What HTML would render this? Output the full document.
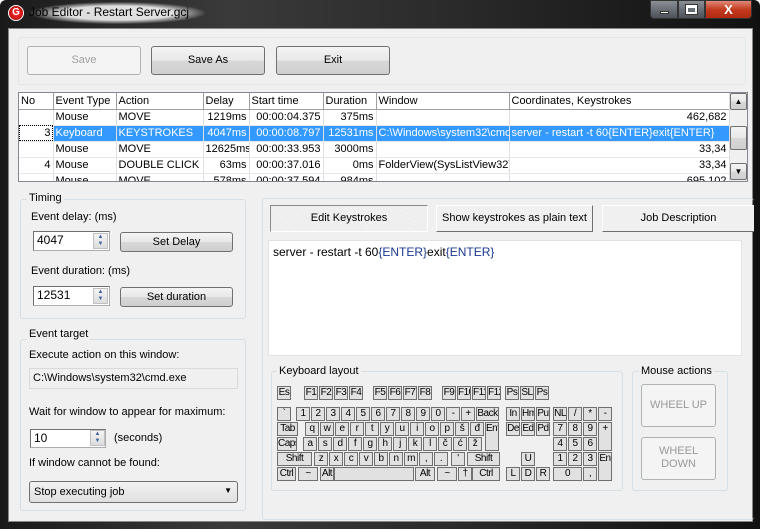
<!DOCTYPE html>
<html><head><meta charset="utf-8">
<style>
*{box-sizing:border-box;margin:0;padding:0}
body{width:760px;height:529px;overflow:hidden;background:#fff;font-family:"Liberation Sans",sans-serif;font-size:11px;color:#000;position:relative}
.a{position:absolute}
#frame{left:0;top:0;width:760px;height:529px;background:linear-gradient(90deg,#1a1a1a 0,#3a3a3a 30%,#2a2a2a 60%,#111 100%);border-radius:6px 6px 0 0}
#client{left:8px;top:28px;width:745px;height:494px;background:#f0f0f0;border:1px solid #888}
.btn{background:linear-gradient(#f4f4f4,#e8e8e8 50%,#d8d8d8 51%,#cfcfcf);border:1px solid #707070;border-radius:3px;text-align:center;font-size:11px}
.dis{background:#f4f4f4;border:1px solid #adb2b5;color:#a0a0a0;border-radius:3px;text-align:center}
.grp{border:1px solid #d5dfe5;border-radius:3px}
.lg{background:#f0f0f0;padding:0 2px;font-size:11px}
table{border-collapse:collapse;font-size:11px}
td{height:16px;padding:0 2px;white-space:nowrap;overflow:hidden;border-right:1px solid #e0e0e0;border-bottom:1px solid #e8e8e8}
.k{position:absolute;height:14px;width:14px;background:#e1e1e1;border:1px solid #707070;font-size:10px;text-align:center;line-height:12px;overflow:hidden;white-space:nowrap;letter-spacing:-0.5px}
.inp{background:#fff;border:1px solid #abadb3;border-top-color:#707070;border-left-color:#707070;padding-left:3px;font-size:12px;line-height:16px}
.spin{background:linear-gradient(#f4f4f4,#dcdcdc);border:1px solid #c0c0c0}
</style></head><body>
<div id="frame" class="a"></div>
<div class="a" style="left:30px;top:2px;width:175px;height:22px;background:radial-gradient(ellipse,rgba(255,255,255,.85) 45%,rgba(255,255,255,0) 72%)"></div>
<div class="a" style="left:8px;top:5px;width:16px;height:16px;border-radius:50%;background:radial-gradient(#f33,#a00);border:1px solid #fff;color:#fff;font-size:10px;font-weight:bold;text-align:center;line-height:14px">G</div>
<div class="a" style="left:29px;top:5px;font-size:12px;color:#000">Job Editor - Restart Server.gcj</div>
<div class="a" style="left:650px;top:0;width:28px;height:19px;background:linear-gradient(#8a8f96,#4c5058);border:1px solid #333;border-radius:0 0 0 4px"><div class="a" style="left:9px;top:10px;width:9px;height:3px;background:#fff;border:1px solid #333"></div></div>
<div class="a" style="left:678px;top:0;width:27px;height:19px;background:linear-gradient(#8a8f96,#4c5058);border:1px solid #333"><div class="a" style="left:7px;top:4px;width:11px;height:9px;border:2px solid #fff;border-top-width:3px;outline:1px solid #333"></div></div>
<div class="a" style="left:705px;top:0;width:47px;height:19px;background:linear-gradient(#e08a78,#c23b1f 50%,#b02a10);border:1px solid #333;border-radius:0 0 4px 0;color:#fff;font-weight:bold;font-size:13px;text-align:center;line-height:17px">X</div>

<div id="client" class="a"></div>
<div class="a grp" style="left:18px;top:37px;width:728px;height:48px;border-color:#dfe6ea"></div>
<div class="a dis" style="left:27px;top:46px;width:114px;height:29px;line-height:27px">Save</div>
<div class="a btn" style="left:151px;top:46px;width:114px;height:29px;line-height:27px">Save As</div>
<div class="a btn" style="left:276px;top:46px;width:114px;height:29px;line-height:27px">Exit</div>

<div class="a" style="left:18px;top:92px;width:730px;height:90px;background:#fff;border:1px solid #828790;overflow:hidden">
<table style="width:710px;table-layout:fixed">
<colgroup><col style="width:34px"><col style="width:63px"><col style="width:87px"><col style="width:46px"><col style="width:74px"><col style="width:53px"><col style="width:133px"><col style="width:220px"></colgroup>
<tr style="background:#fff"><td style="border:1px solid #a0a0a0;border-left:0;border-top:0">No</td><td style="border:1px solid #a0a0a0;border-top:0">Event Type</td><td style="border:1px solid #a0a0a0;border-top:0">Action</td><td style="border:1px solid #a0a0a0;border-top:0">Delay</td><td style="border:1px solid #a0a0a0;border-top:0">Start time</td><td style="border:1px solid #a0a0a0;border-top:0">Duration</td><td style="border:1px solid #a0a0a0;border-top:0">Window</td><td style="border:1px solid #a0a0a0;border-top:0">Coordinates, Keystrokes</td></tr>
<tr><td></td><td>Mouse</td><td>MOVE</td><td align="right">1219ms</td><td align="right">00:00:04.375</td><td align="right">375ms</td><td></td><td align="right">462,682</td></tr>
<tr style="background:#3399ff;color:#fff"><td align="right" style="background:#fff;color:#000;outline:1px dotted #000;outline-offset:-1px">3</td><td>Keyboard</td><td>KEYSTROKES</td><td align="right">4047ms</td><td align="right">00:00:08.797</td><td align="right">12531ms</td><td>C:\Windows\system32\cmd.exe</td><td>server - restart -t 60{ENTER}exit{ENTER}</td></tr>
<tr><td></td><td>Mouse</td><td>MOVE</td><td align="right">12625ms</td><td align="right">00:00:33.953</td><td align="right">3000ms</td><td></td><td align="right">33,34</td></tr>
<tr><td align="right">4</td><td>Mouse</td><td>DOUBLE CLICK</td><td align="right">63ms</td><td align="right">00:00:37.016</td><td align="right">0ms</td><td>FolderView(SysListView32)</td><td align="right">33,34</td></tr>
<tr><td></td><td>Mouse</td><td>MOVE</td><td align="right">578ms</td><td align="right">00:00:37.594</td><td align="right">984ms</td><td></td><td align="right">695,102</td></tr>
</table>
<div class="a" style="left:710px;top:0;width:18px;height:88px;background:#f0f0f0;border-left:1px solid #ddd">
<div class="a btn" style="left:0;top:0;width:17px;height:17px;font-size:8px;line-height:15px;border-radius:2px">▲</div>
<div class="a btn" style="left:0;top:33px;width:17px;height:24px;border-radius:2px"></div>
<div class="a btn" style="left:0;top:70px;width:17px;height:17px;font-size:8px;line-height:15px;border-radius:2px">▼</div>
</div>
</div>

<div class="a grp" style="left:20px;top:199px;width:226px;height:120px"></div>
<div class="a lg" style="left:27px;top:192px">Timing</div>
<div class="a" style="left:31px;top:211px">Event delay: (ms)</div>
<div class="a inp" style="left:33px;top:231px;width:77px;height:20px">4047</div>
<div class="a spin" style="left:93px;top:233px;width:15px;height:16px;font-size:6px;color:#4060a0;text-align:center;line-height:7px">▲<br>▼</div>
<div class="a btn" style="left:120px;top:232px;width:113px;height:20px;line-height:18px">Set Delay</div>
<div class="a" style="left:31px;top:265px">Event duration: (ms)</div>
<div class="a inp" style="left:33px;top:286px;width:77px;height:20px">12531</div>
<div class="a spin" style="left:93px;top:288px;width:15px;height:16px;font-size:6px;color:#4060a0;text-align:center;line-height:7px">▲<br>▼</div>
<div class="a btn" style="left:120px;top:287px;width:113px;height:20px;line-height:18px">Set duration</div>

<div class="a grp" style="left:20px;top:339px;width:226px;height:172px"></div>
<div class="a lg" style="left:27px;top:328px">Event target</div>
<div class="a" style="left:29px;top:349px">Execute action on this window:</div>
<div class="a" style="left:29px;top:368px;width:209px;height:21px;background:#f0f0f0;border:1px solid #dadada;padding:3px 3px;font-size:11px">C:\Windows\system32\cmd.exe</div>
<div class="a" style="left:29px;top:406px">Wait for window to appear for maximum:</div>
<div class="a inp" style="left:30px;top:429px;width:76px;height:19px">10</div>
<div class="a spin" style="left:90px;top:430px;width:15px;height:16px;font-size:6px;color:#4060a0;text-align:center;line-height:7px">▲<br>▼</div>
<div class="a" style="left:114px;top:432px">(seconds)</div>
<div class="a" style="left:29px;top:457px">If window cannot be found:</div>
<div class="a btn" style="left:29px;top:481px;width:209px;height:22px;text-align:left;padding:4px 4px;font-size:11px;background:linear-gradient(#f2f2f2,#e0e0e0)">Stop executing job<span class="a" style="right:5px;top:4px;font-size:8px">▼</span></div>

<div class="a grp" style="left:262px;top:198px;width:492px;height:322px;border-right:0"></div>
<div class="a" style="left:270px;top:205px;width:158px;height:27px;background:repeating-linear-gradient(45deg,#f5f5f5 0 1px,#e9e9e9 1px 2px);border:1px solid #8a8a8a;border-right-color:#fff;border-bottom-color:#fff;text-align:center;line-height:25px">Edit Keystrokes</div>
<div class="a" style="left:436px;top:205px;width:157px;height:27px;background:#f0f0f0;border:1px solid #fff;border-right-color:#707070;border-bottom-color:#707070;text-align:center;line-height:25px">Show keystrokes as plain text</div>
<div class="a" style="left:602px;top:205px;width:152px;height:27px;background:#f0f0f0;border:1px solid #fff;border-right:0;border-bottom-color:#707070;text-align:center;line-height:25px">Job Description</div>
<div class="a" style="left:268px;top:240px;width:474px;height:116px;background:#fff;border:1px solid #e2e2e2;padding:4px 4px;font-size:12px">server - restart -t 60<span style="color:#1a3a90">{ENTER}</span>exit<span style="color:#1a3a90">{ENTER}</span></div>

<div class="a grp" style="left:271px;top:371px;width:352px;height:120px"></div>
<div class="a lg" style="left:277px;top:365px">Keyboard layout</div>
<div class="a grp" style="left:632px;top:371px;width:96px;height:120px"></div>
<div class="a lg" style="left:639px;top:365px">Mouse actions</div>
<div class="a dis" style="left:641px;top:384px;width:75px;height:43px;line-height:41px;font-size:11px;color:#999">WHEEL UP</div>
<div class="a dis" style="left:641px;top:437px;width:75px;height:43px;padding-top:7px;line-height:13px;font-size:11px;color:#999">WHEEL<br>DOWN</div>

<div class="k" style="left:277px;top:386px">Es</div>
<div class="k" style="left:304px;top:386px">F1</div><div class="k" style="left:319px;top:386px">F2</div><div class="k" style="left:334px;top:386px">F3</div><div class="k" style="left:349px;top:386px">F4</div>
<div class="k" style="left:373px;top:386px">F5</div><div class="k" style="left:388px;top:386px">F6</div><div class="k" style="left:403px;top:386px">F7</div><div class="k" style="left:418px;top:386px">F8</div>
<div class="k" style="left:442px;top:386px">F9</div><div class="k" style="left:457px;top:386px">F10</div><div class="k" style="left:472px;top:386px">F11</div><div class="k" style="left:487px;top:386px">F12</div>
<div class="k" style="left:505px;top:386px">Ps</div><div class="k" style="left:520px;top:386px">SL</div><div class="k" style="left:535px;top:386px">Ps</div>

<div class="k" style="left:277px;top:407px">`</div>
<div class="k" style="left:296px;top:407px">1</div><div class="k" style="left:311px;top:407px">2</div><div class="k" style="left:326px;top:407px">3</div><div class="k" style="left:341px;top:407px">4</div><div class="k" style="left:356px;top:407px">5</div><div class="k" style="left:371px;top:407px">6</div><div class="k" style="left:386px;top:407px">7</div><div class="k" style="left:401px;top:407px">8</div><div class="k" style="left:416px;top:407px">9</div><div class="k" style="left:431px;top:407px">0</div><div class="k" style="left:446px;top:407px">-</div><div class="k" style="left:461px;top:407px">+</div>
<div class="k" style="left:476px;top:407px;width:23px">Back</div>
<div class="k" style="left:506px;top:407px">In</div><div class="k" style="left:521px;top:407px">Hm</div><div class="k" style="left:536px;top:407px">Pu</div>
<div class="k" style="left:553px;top:407px">NL</div><div class="k" style="left:568px;top:407px">/</div><div class="k" style="left:583px;top:407px">*</div><div class="k" style="left:598px;top:407px">-</div>

<div class="k" style="left:277px;top:422px;width:21px">Tab</div>
<div class="k" style="left:305px;top:422px">q</div><div class="k" style="left:320px;top:422px">w</div><div class="k" style="left:335px;top:422px">e</div><div class="k" style="left:350px;top:422px">r</div><div class="k" style="left:365px;top:422px">t</div><div class="k" style="left:380px;top:422px">y</div><div class="k" style="left:395px;top:422px">u</div><div class="k" style="left:410px;top:422px">i</div><div class="k" style="left:425px;top:422px">o</div><div class="k" style="left:440px;top:422px">p</div><div class="k" style="left:455px;top:422px">š</div><div class="k" style="left:470px;top:422px">đ</div>
<div class="k" style="left:485px;top:422px;width:14px;height:29px">Ent</div>
<div class="k" style="left:506px;top:422px">De</div><div class="k" style="left:521px;top:422px">Ed</div><div class="k" style="left:536px;top:422px">Pd</div>
<div class="k" style="left:553px;top:422px">7</div><div class="k" style="left:568px;top:422px">8</div><div class="k" style="left:583px;top:422px">9</div><div class="k" style="left:598px;top:422px;height:29px">+</div>

<div class="k" style="left:277px;top:437px;width:20px">Caps</div>
<div class="k" style="left:303px;top:437px">a</div><div class="k" style="left:318px;top:437px">s</div><div class="k" style="left:333px;top:437px">d</div><div class="k" style="left:348px;top:437px">f</div><div class="k" style="left:363px;top:437px">g</div><div class="k" style="left:378px;top:437px">h</div><div class="k" style="left:393px;top:437px">j</div><div class="k" style="left:408px;top:437px">k</div><div class="k" style="left:423px;top:437px">l</div><div class="k" style="left:438px;top:437px">č</div><div class="k" style="left:453px;top:437px">ć</div><div class="k" style="left:468px;top:437px">ž</div>
<div class="k" style="left:553px;top:437px">4</div><div class="k" style="left:568px;top:437px">5</div><div class="k" style="left:583px;top:437px">6</div>

<div class="k" style="left:277px;top:452px;width:35px">Shift</div>
<div class="k" style="left:314px;top:452px">z</div><div class="k" style="left:329px;top:452px">x</div><div class="k" style="left:344px;top:452px">c</div><div class="k" style="left:359px;top:452px">v</div><div class="k" style="left:374px;top:452px">b</div><div class="k" style="left:389px;top:452px">n</div><div class="k" style="left:404px;top:452px">m</div><div class="k" style="left:419px;top:452px">,</div><div class="k" style="left:434px;top:452px">.</div><div class="k" style="left:451px;top:452px">'</div>
<div class="k" style="left:467px;top:452px;width:33px">Shift</div>
<div class="k" style="left:521px;top:452px">U</div>
<div class="k" style="left:553px;top:452px">1</div><div class="k" style="left:568px;top:452px">2</div><div class="k" style="left:583px;top:452px">3</div><div class="k" style="left:598px;top:452px;height:29px">En</div>

<div class="k" style="left:277px;top:467px;width:19px">Ctrl</div>
<div class="k" style="left:298px;top:467px;width:20px">~</div>
<div class="k" style="left:320px;top:467px">Alt</div>
<div class="k" style="left:334px;top:467px;width:80px"></div>
<div class="k" style="left:415px;top:467px;width:20px">Alt</div>
<div class="k" style="left:437px;top:467px;width:20px">~</div>
<div class="k" style="left:458px;top:467px">†</div>
<div class="k" style="left:472px;top:467px;width:28px">Ctrl</div>
<div class="k" style="left:506px;top:467px">L</div><div class="k" style="left:521px;top:467px">D</div><div class="k" style="left:536px;top:467px">R</div>
<div class="k" style="left:553px;top:467px;width:29px">0</div><div class="k" style="left:583px;top:467px">,</div>
</body></html>
